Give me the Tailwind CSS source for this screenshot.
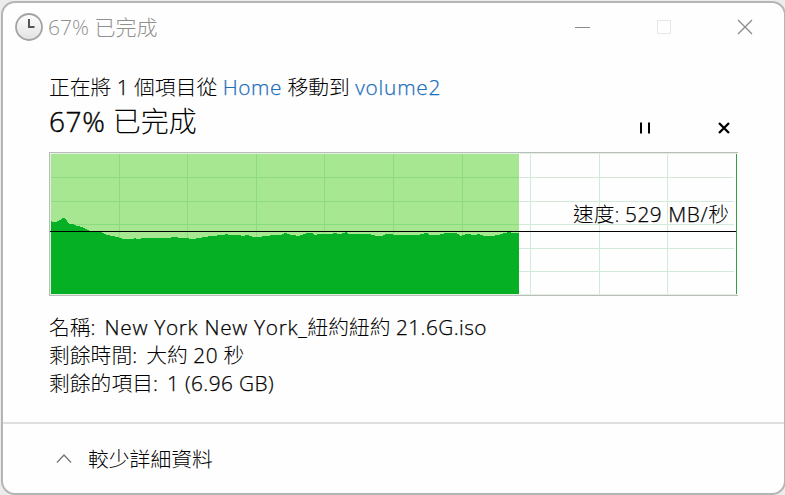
<!DOCTYPE html>
<html lang="zh-Hant">
<head>
  <meta charset="UTF-8">
  <meta name="viewport" content="width=device-width, initial-scale=1.0">
  <title>67% 已完成</title>
  <script src="https://cdn.jsdelivr.net/npm/@tailwindcss/browser@4"></script>
</head>
<body class="w-[785px] h-[495px] overflow-hidden bg-[#ececec] pl-px pt-px font-['Open_Sans','Noto_Sans_CJK_TC',sans-serif] text-black">
  <main class="w-[785px] h-[494px] flex flex-col bg-[#fefefe] border-2 border-[#b4b5b4] rounded-[14px] overflow-hidden">

    <!-- Title bar -->
    <header class="h-[48px] shrink-0 flex items-center pl-3 pr-[31px] text-[#909090]">
      <svg class="w-7 h-7 shrink-0" viewBox="0 0 28 28" fill="none">
        <defs>
          <linearGradient id="face" x1="0" y1="0" x2="0" y2="1">
            <stop offset="0" stop-color="#fff" />
            <stop offset="1" stop-color="#e2e2e2" />
          </linearGradient>
        </defs>
        <circle cx="14" cy="14" r="13" fill="url(#face)" stroke="#a3a3a3" stroke-width="1.8" />
        <path d="M14 6v8h5.5" stroke="#555" stroke-width="2" />
      </svg>
      <h1 class="ml-[5px] text-[21px] font-light leading-7 whitespace-nowrap">67% 已完成</h1>
      <div class="ml-auto flex items-center gap-[65px]">
        <svg class="w-4 h-4" viewBox="0 0 16 16"><path d="M0 8.5h15" stroke="#8a8a8a" /></svg>
        <svg class="w-4 h-4" viewBox="0 0 16 16" fill="none"><path d="M1.5 1.5h13v13h-13z" stroke="#e6e6e6" /></svg>
        <svg class="w-4 h-4" viewBox="0 0 16 16"><path d="M1 1l14 14M15 1L1 15" stroke="#8a8a8a" stroke-width="1.3" /></svg>
      </div>
    </header>

    <section class="grow pl-[46px] pt-[22px]">
      <p class="h-7 text-[20.8px] leading-7 font-light whitespace-nowrap">正在將 <span class="[-webkit-text-stroke:0.25px]">1</span> 個項目從 <a class="tracking-[0.6px] text-[#1b6ebc] [-webkit-text-stroke:0.25px]">Home</a> 移動到 <a class="tracking-[0.8px] text-[#1b6ebc] [-webkit-text-stroke:0.25px]">volume2</a></p>
      <div class="h-[51px] w-[689px] flex justify-between">
        <h2 class="text-[28px] leading-[40px] font-light whitespace-nowrap"><span class="tracking-[0.6px] [-webkit-text-stroke:0.4px]">67%</span> 已完成</h2>
        <div class="flex gap-[68px] pt-[21px] pr-2">
          <svg class="w-[11px] h-3" viewBox="0 0 11 12"><path d="M1 .5h2v11H1zM9 .5h2v11H9z" /></svg>
          <svg class="w-3 h-3" viewBox="0 0 12 12"><path d="M1 1l10 10M11 1L1 11" stroke="#000" stroke-width="2.3" /></svg>
        </div>
      </div>

      <!-- Speed graph -->
      <div class="relative w-[689px] h-[144px]">
        <svg class="block w-[689px] h-[144px]" viewBox="0 0 689 144" shape-rendering="crispEdges">
          <path d="M.5 144V.5H689M0 143.5h689" fill="none" stroke="#b8bdb8" />
          <path d="M1.5 1.5H688M1.5 2v140M1 142.5h687" fill="none" stroke="#e4efe4" />
          <path d="M481.5 2v140M550.5 2v140M618.5 2v140M470 25.5h215M470 49.5h215M470 72.5h215M470 96.5h215M470 119.5h215" stroke="#d3e9d9" />
          <path d="M2 2h468v140H2z" fill="#a7e792" />
          <path d="M70.5 2v140M138.5 2v140M207.5 2v140M275.5 2v140M344.5 2v140M413.5 2v140M2 25.5h468M2 49.5h468M2 72.5h468" stroke="#8cdb80" />
          <path fill="#06b025" d="M2 142V69l2 1h3l2-1 2-1 2-2h3l2 3 2 3h4l4 2 5 1 4 2 4 2 11 1 6 3 6 1 4 1 6 2h10l1-1 3 1 8-1h25l2-1h4l3 1 5 0 10 1 4-1 7-1 5-1 13-1 3-1 3 1h11l2 1 6-1 5 2h7l3-1h5l4-1h9l4-2 3 1 4 1 7 1 5-2 3-1h5l3 2 3-1h14l2-1 6 1 3-1 3-1 2 2h20l5 1 3 1h6l4-2h6l2 1h24l3-1 6-1 3 2h8l4-1 3-1h10l3 1 3 2 5-2 10 1 2-1 6 2h7l7-1 6-2 5-1 4 1H470V142z" />
          <path d="M1 79.5h687" stroke="#000" />
          <path d="M687.5 2v140" stroke="#2fa047" />
        </svg>
        <span class="absolute right-[9px] top-[48px] text-[20.8px] leading-7 font-light whitespace-nowrap">速度: <span class="tracking-[0.6px] [-webkit-text-stroke:0.25px]">529 MB/</span>秒</span>
      </div>

      <dl class="pt-[17px] text-[20.8px] leading-7 font-light whitespace-nowrap">
        <div class="flex gap-[9px]"><dt>名稱<span class="[-webkit-text-stroke:0.25px]">:</span></dt><dd><span class="tracking-[0.7px] [-webkit-text-stroke:0.25px]">New York New York_</span>紐約紐約 <span class="tracking-[0.4px] [-webkit-text-stroke:0.25px]">21.6G.iso</span></dd></div>
        <div class="flex gap-[9px]"><dt>剩餘時間<span class="[-webkit-text-stroke:0.25px]">:</span></dt><dd>大約 <span class="tracking-[0.6px] [-webkit-text-stroke:0.25px]">20</span> 秒</dd></div>
        <div class="flex gap-[9px]"><dt>剩餘的項目<span class="[-webkit-text-stroke:0.25px]">:</span></dt><dd class="tracking-[0.4px] [-webkit-text-stroke:0.25px]">1 (6.96 GB)</dd></div>
      </dl>
    </section>

    <footer class="h-[71px] shrink-0 flex items-center pl-[53px] border-t-2 border-[#dfdfdf]">
      <svg class="w-4 h-4" viewBox="0 0 16 16" fill="none"><path d="M1 11.5L8 4l7 7.5" stroke="#777" stroke-width="1.3" /></svg>
      <button class="ml-4 text-[20.8px] leading-7 font-light">較少詳細資料</button>
    </footer>
  </main>
</body>
</html>
